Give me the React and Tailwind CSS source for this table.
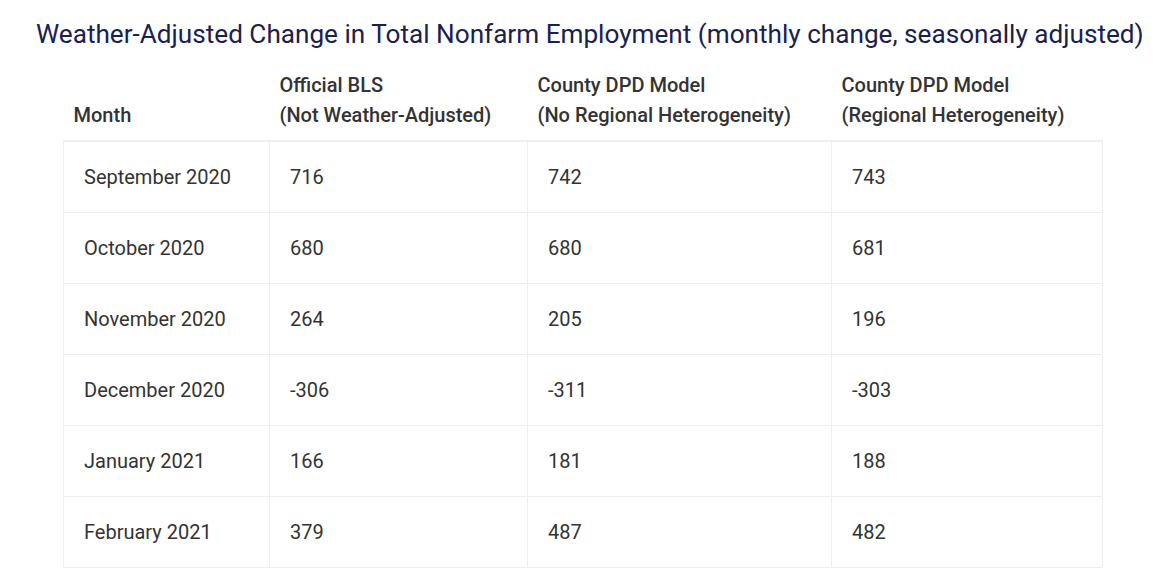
const rows = [
  ['September 2020', '716', '742', '743'],
  ['October 2020', '680', '680', '681'],
  ['November 2020', '264', '205', '196'],
  ['December 2020', '-306', '-311', '-303'],
  ['January 2021', '166', '181', '188'],
  ['February 2021', '379', '487', '482'],
];

export default function App() {
  return (
    <div className="w-[1162px] h-[581px] bg-white overflow-hidden text-[#333]" style={{ fontFamily: 'Roboto, "Liberation Sans", sans-serif' }}>
      <h1 className="pl-[36px] pt-[18px] text-[26.15px] leading-[32px] text-[#1a2150] whitespace-nowrap">
        Weather-Adjusted Change in Total Nonfarm Employment (monthly change, seasonally adjusted)
      </h1>
      <table className="ml-[63px] mt-[20px] w-[1039px] border-collapse table-fixed">
        <colgroup>
          <col className="w-[206px]" />
          <col className="w-[258px]" />
          <col className="w-[304px]" />
          <col className="w-[271px]" />
        </colgroup>
        <thead>
          <tr className="text-[20px] leading-[30px] text-left align-bottom">
            <th className="pl-[10px] pb-[10px] font-medium whitespace-nowrap">Month</th>
            <th className="pl-[10px] pb-[10px] font-medium whitespace-nowrap">Official BLS<br />(Not Weather-Adjusted)</th>
            <th className="pl-[10px] pb-[10px] font-medium whitespace-nowrap">County DPD Model<br />(No Regional Heterogeneity)</th>
            <th className="pl-[10px] pb-[10px] font-medium whitespace-nowrap">County DPD Model<br />(Regional Heterogeneity)</th>
          </tr>
        </thead>
        <tbody className="border-t-2 border-[#eeeeee]">
          {rows.map((r) => (
            <tr key={r[0]} className="h-[71px] text-[20px]">
              {r.map((c, i) => (
                <td key={i} className="pl-[20px] border border-[#eeeeee] align-middle">{c}</td>
              ))}
            </tr>
          ))}
        </tbody>
      </table>
    </div>
  );
}
